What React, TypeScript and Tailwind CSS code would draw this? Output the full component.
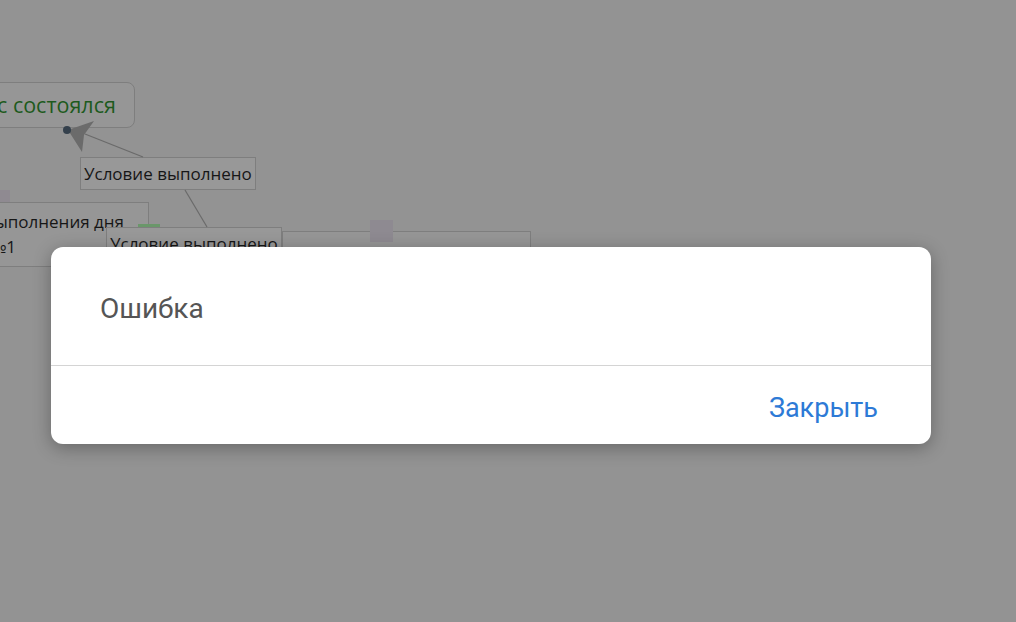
import React from "react";

export default function App() {
  return (
    <div className="relative w-[1016px] h-[622px] overflow-hidden bg-[#939393]" style={{ fontFamily: "'Open Sans', Lato, sans-serif" }}>
      {/* diagram canvas (dimmed) */}
      <div className="absolute inset-0">
        <div className="absolute left-[-12px] top-[82px] w-[147px] h-[46px] rounded-[8px] border border-[#7e7e7e] bg-[#969696] flex items-center">
          <span className="pl-[8px] text-[21.5px] text-[#1d5a1d] leading-none whitespace-nowrap">с состоялся</span>
        </div>
        <div className="absolute left-[80px] top-[157px] w-[176px] h-[33px] border border-[#7e7e7e] bg-[#989898] flex items-center px-[3px] text-[17px] text-[#161616] whitespace-nowrap">
          Условие выполнено
        </div>
        <div className="absolute left-[-2px] top-[190px] w-[12px] h-[13px] bg-[#8f8a91]" />
        <div className="absolute left-[-22px] top-[202px] w-[171px] h-[65px] border border-[#7e7e7e] bg-[#969696] text-[17px] text-[#161616] leading-[25px] pt-[6px] pl-[6px] whitespace-nowrap">
          <div>выполнения дня</div>
          <div className="pl-[4px]">№1</div>
        </div>
        <div className="absolute left-[138px] top-[224px] w-[22px] h-[4px] bg-[#6a976a]" />
        <div className="absolute left-[282px] top-[231px] w-[249px] h-[60px] border border-[#7e7e7e] bg-[#969696]" />
        <div className="absolute left-[370px] top-[220px] w-[23px] h-[22px] bg-[#8e8a91]" />
        <div className="absolute left-[106px] top-[227px] w-[176px] h-[33px] border border-[#7e7e7e] bg-[#989898] flex items-center px-[3px] text-[17px] text-[#161616] whitespace-nowrap">
          Условие выполнено
        </div>
        <svg className="absolute left-0 top-0" width="1016" height="622">
          <line x1="85" y1="134" x2="143" y2="157" stroke="#6a6a6a" strokeWidth="1.2" />
          <line x1="185" y1="190" x2="207" y2="227" stroke="#6a6a6a" strokeWidth="1.2" />
          <polygon points="68,130 94,121 84,135 82,152" fill="#6b6b6b" />
          <circle cx="67" cy="130" r="4" fill="#34404c" />
        </svg>
      </div>

      {/* dialog */}
      <div
        className="absolute left-[51px] top-[247px] w-[880px] bg-white rounded-[12px] shadow-[0_4px_18px_rgba(0,0,0,0.3)] flex flex-col"
        style={{ fontFamily: "Roboto, 'Liberation Sans', sans-serif" }}
      >
        <div className="h-[119px] flex items-center pl-[49px] pt-[6px] border-b border-[#d4d4d4]">
          <span className="text-[28px] text-[#555555]">Ошибка</span>
        </div>
        <div className="h-[78px] flex items-center justify-end pr-[53px] pt-[6px]">
          <span className="text-[27px] text-[#2d7ad6]">Закрыть</span>
        </div>
      </div>
    </div>
  );
}
